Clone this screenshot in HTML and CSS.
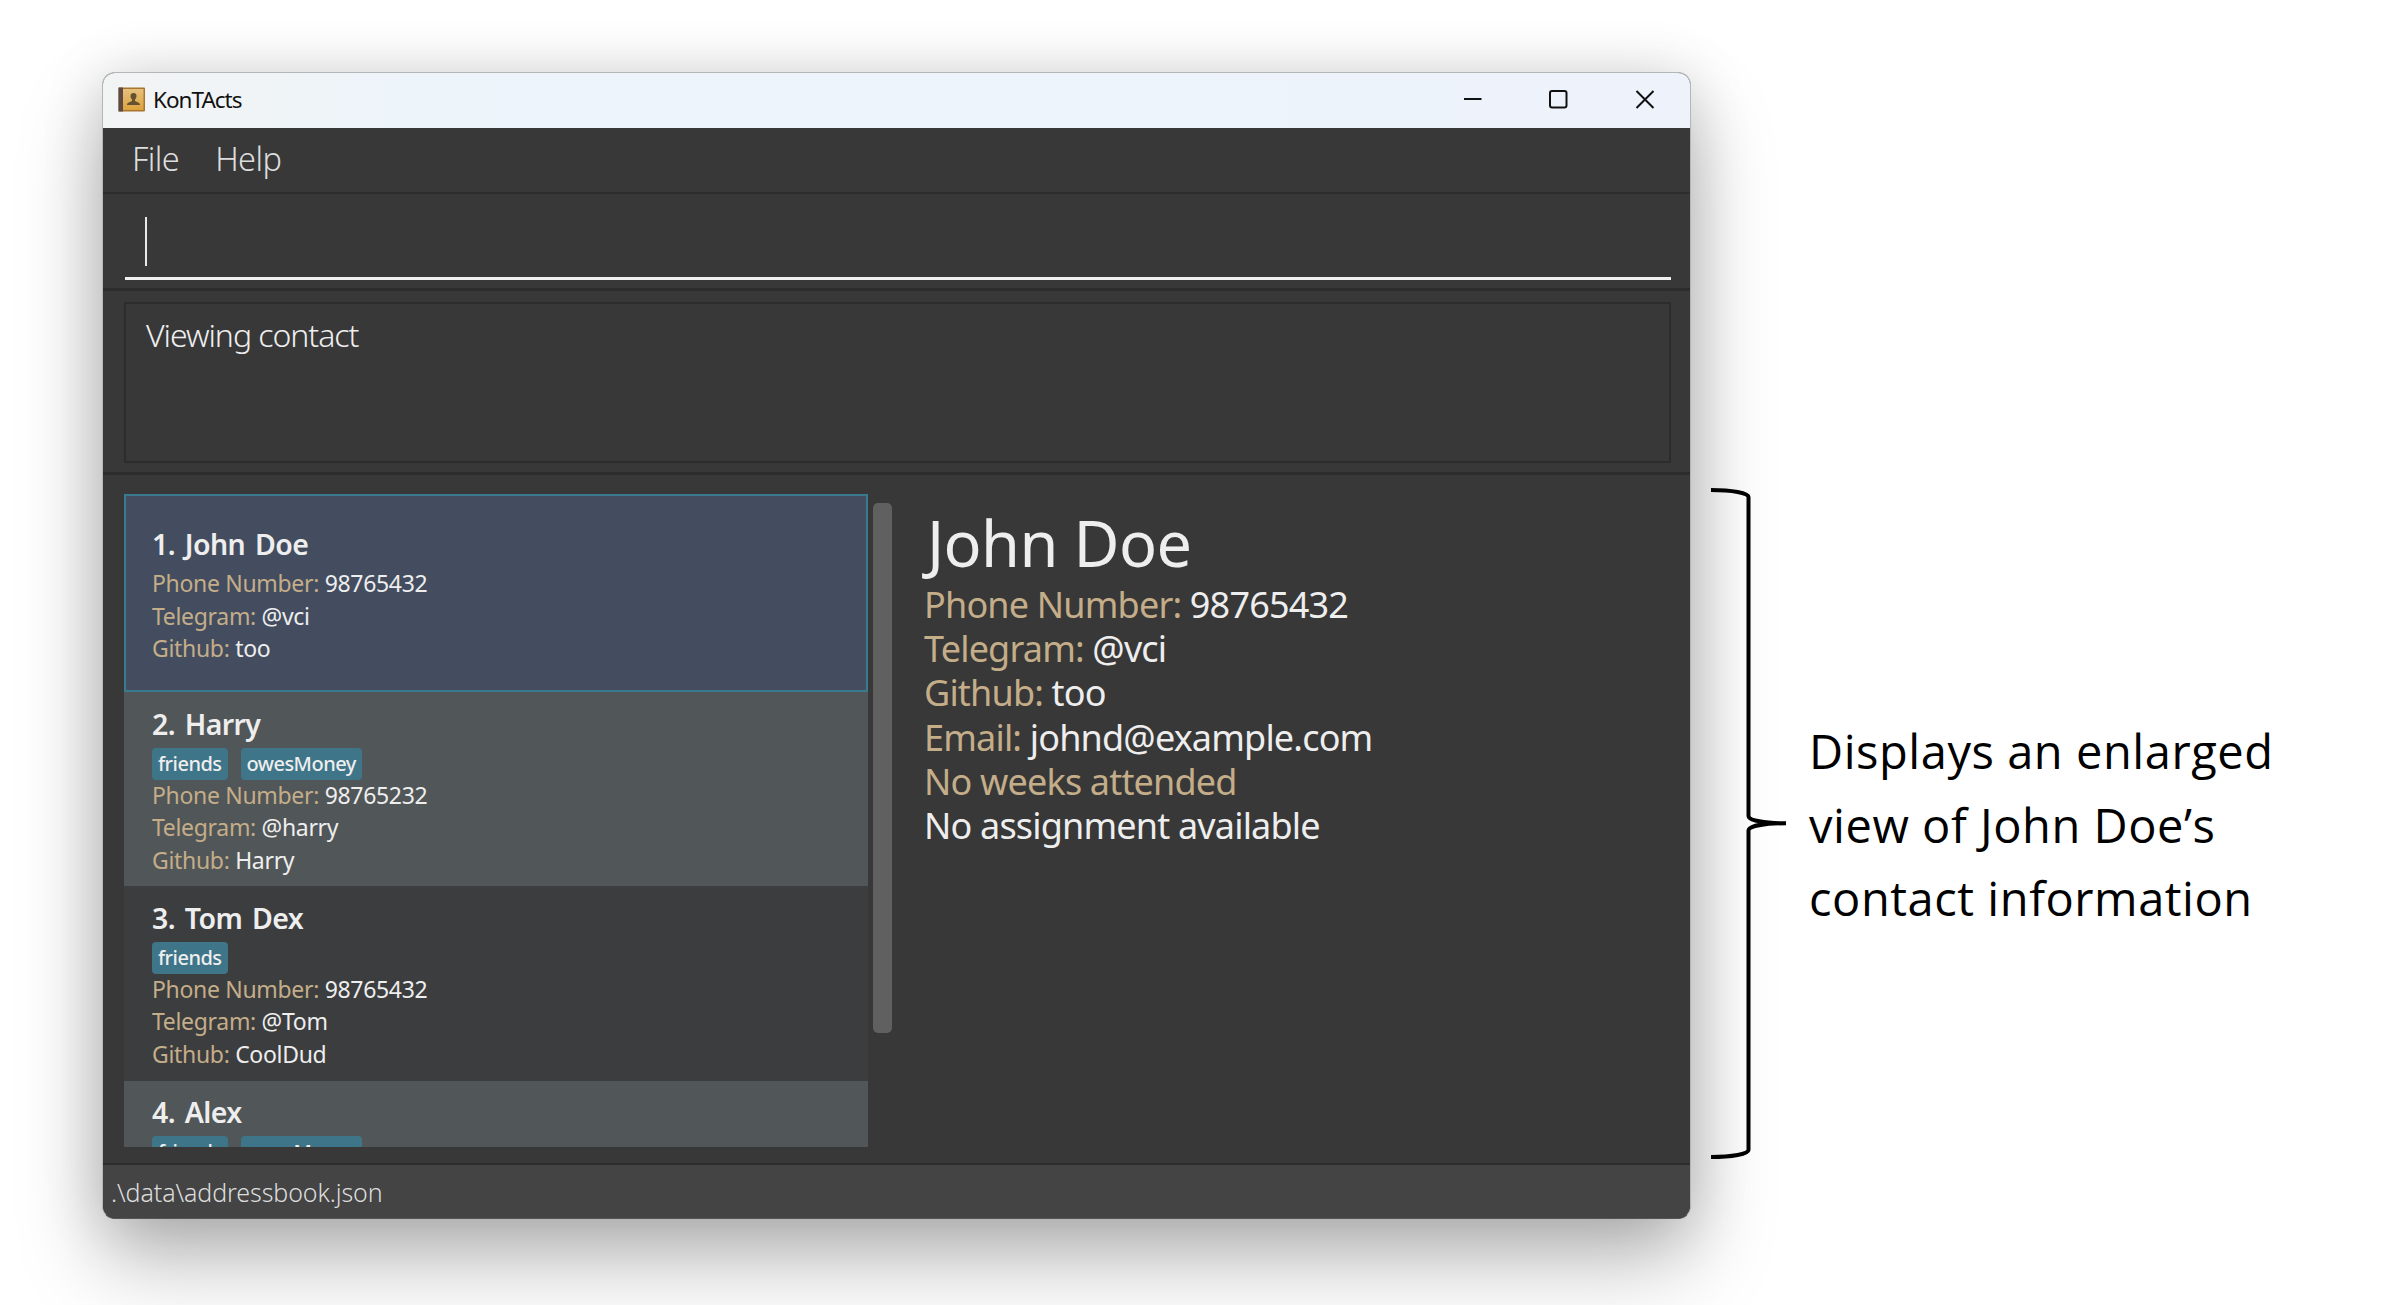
FILE: index.html
```html
<!DOCTYPE html>
<html lang="en">
<head>
<meta charset="utf-8">
<title>KonTActs</title>
<link rel="stylesheet" href="styles.css">
</head>
<body>
<div class="page">
  <div class="window">
    <header class="titlebar">
      <svg class="app-icon" width="28" height="26" viewBox="0 0 28 26">
        <defs><linearGradient id="cover" x1="0" y1="0" x2="0" y2="1"><stop offset="0" stop-color="#e6c07f"/><stop offset="1" stop-color="#dda33c"/></linearGradient></defs>
        <rect x="0.5" y="0.5" width="26.5" height="24" rx="1" fill="#a9752c"/>
        <rect x="5" y="2" width="20.5" height="21" fill="url(#cover)"/>
        <rect x="0.5" y="0.5" width="4.5" height="24" fill="#5d4a45"/>
        <path d="M15.500 6c2 0 3 1.300 3 3 0 1.500-.7 2.600-1.500 3.400v1.600c1 1 5 .9 5 4H9c0-3.100 4-3 5-4v-1.600C13.200 11.600 12.500 10.500 12.500 9c0-1.700 1-3 3-3z" fill="#65512f"/>
      </svg>
      <span class="app-name">KonTActs</span>
      <svg class="controls" width="192" height="20" viewBox="0 0 192 20" fill="none" stroke="#111" stroke-width="2">
        <path d="M1 9h17.500"/>
        <rect x="87" y="1" width="16.500" height="16.500" rx="2"/>
        <path d="M173.500 1l17 17M190.500 1l-17 17"/>
      </svg>
    </header>
    <nav class="menu"><span>File</span><span>Help</span></nav>
    <div class="command"><div class="field"><span class="caret"></span></div></div>
    <div class="result"><div class="result-box">Viewing contact</div></div>
    <main class="main">
      <div class="list">
        <article class="card selected">
          <h2>1. John Doe</h2>
          <p><b>Phone Number:</b> 98765432</p>
          <p><b>Telegram:</b> @vci</p>
          <p><b>Github:</b> too</p>
        </article>
        <article class="card even">
          <h2>2. Harry</h2>
          <div class="tags"><span>friends</span><span>owesMoney</span></div>
          <p><b>Phone Number:</b> 98765232</p>
          <p><b>Telegram:</b> @harry</p>
          <p><b>Github:</b> Harry</p>
        </article>
        <article class="card">
          <h2>3. Tom Dex</h2>
          <div class="tags"><span>friends</span></div>
          <p><b>Phone Number:</b> 98765432</p>
          <p><b>Telegram:</b> @Tom</p>
          <p><b>Github:</b> CoolDud</p>
        </article>
        <article class="card even">
          <h2>4. Alex</h2>
          <div class="tags"><span>friends</span><span>owesMoney</span></div>
        </article>
      </div>
      <div class="scrollbar"></div>
      <section class="detail">
        <h1>John Doe</h1>
        <p><b>Phone Number:</b> 98765432</p>
        <p><b>Telegram:</b> @vci</p>
        <p><b>Github:</b> too</p>
        <p><b>Email:</b> johnd@example.com</p>
        <p><b>No weeks attended</b></p>
        <p>No assignment available</p>
      </section>
    </main>
    <footer class="status">.\data\addressbook.json</footer>
  </div>
  <svg class="brace" width="78" height="674" viewBox="0 0 78 674" fill="none" stroke="#000" stroke-width="4">
    <path d="M1 3C22 3 38.500 6 38.500 10V329C38.500 333.500 55 336.300 76 336.300C55 336.300 38.500 339 38.500 343.500V663C38.500 667 22 670 1 670"/>
  </svg>
  <div class="note">Displays an enlarged<br>view of John Doe’s<br>contact information</div>
</div>
</body>
</html>
```
FILE: styles.css
```css
* { box-sizing: border-box; }
body { margin: 0; background: #fff; font-family: "Noto Sans", sans-serif; }
h1, h2, p { margin: 0; font-weight: 400; white-space: nowrap; }
b { font-weight: 400; color: #c4ad89; }
.page { display: flex; width: 2384px; height: 1305px; padding: 72px 0 0 102px; overflow: hidden; }
.window {
  display: flex; flex-direction: column; flex: none;
  width: 1589px; height: 1147px;
  border: 1px solid #b4b6b8; border-bottom-color: #555; border-radius: 13px;
  overflow: hidden; background: #383838; color: #eee;
  box-shadow: 0 42px 84px rgba(0, 0, 0, .27), 0 4px 60px rgba(0, 0, 0, .15);
}
.titlebar { display: flex; align-items: center; height: 55px; padding: 0 35px 2px 15px; background: linear-gradient(90deg, #f2f4f4, #edf4fa 20%, #eef3fb); color: #111; font-size: 22.500px; letter-spacing: -1px; }
.app-name { margin-left: 7px; flex: 1; }
.menu { display: flex; align-items: center; gap: 36px; height: 66px; padding: 0 0 3px 29px; border-bottom: 2px solid #2d2d2d; color: #ddd; font-size: 32.500px; font-weight: 300; letter-spacing: -.6px; }
.command { height: 97px; padding: 0 19px 0 22px; border-bottom: 3px solid #2c2c2c; }
.field { height: 86px; border-bottom: 3px solid #f0f0f0; padding: 23px 0 0 20px; }
.caret { display: block; width: 2px; height: 49px; background: #e8e8e8; }
.result { height: 184px; padding: 11px 19px 0 21px; border-bottom: 3px solid #2c2c2c; }
.result-box { height: 161px; border: 2px solid #2c2c2c; padding: 7px 0 0 20px; font-size: 32px; font-weight: 300; line-height: 48px; letter-spacing: -1.050px; }
.main { display: flex; height: 688px; padding: 19px 0 16px 21px; }
.list { width: 744px; height: 653px; overflow: hidden; }
.card { height: 194.300px; padding: 11.700px 0 0 28px; background: #3c3d3f; font-size: 23px; line-height: 32.500px; letter-spacing: -.32px; }
.card.even { background: #515658; }
.card.selected { height: 198px; padding: 28px 0 0 26px; background: #434d5f; border: 2px solid #3a7a8f; }
.card h2 { font-size: 28.500px; font-weight: 600; line-height: 40px; letter-spacing: -.6px; word-spacing: 3px; }
.selected h2 { margin-bottom: 3px; }
.tags { display: flex; gap: 13px; margin: 4px 0 -1px; }
.tags span { height: 32px; padding: 0 6px; border-radius: 4px; background: #3e7589; font-size: 20px; font-weight: 500; line-height: 32px; letter-spacing: -.52px; }
.scrollbar { width: 19px; height: 530px; margin: 9px 0 0 5px; border-radius: 5px; background: #606060; }
.detail { margin: 9px 0 0 32px; font-size: 36px; line-height: 44.200px; letter-spacing: -.82px; }
.detail h1 { padding-left: 3px; font-size: 63px; line-height: 80px; letter-spacing: -.6px; }
.status { display: flex; align-items: center; flex: 1; padding: 0 0 0 8px; border-top: 2px solid #2c2c2c; background: #444; color: #ddd; font-size: 25px; font-weight: 300; letter-spacing: -.1px; }
.brace { flex: none; margin: 415px 0 0 19px; }
.note { margin: 643px 0 0 21px; font-family: "Open Sans", sans-serif; font-size: 47px; line-height: 73.600px; letter-spacing: .55px; white-space: nowrap; color: #000; }
```
